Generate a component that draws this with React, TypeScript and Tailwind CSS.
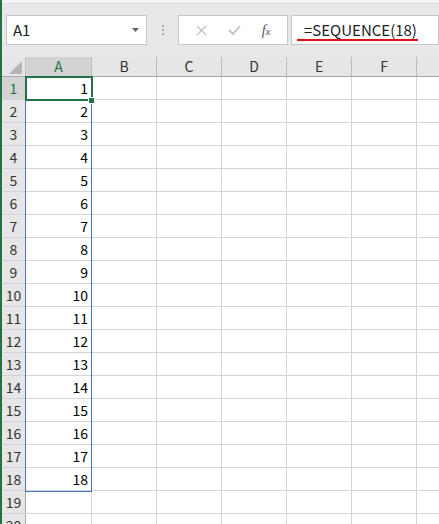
const COLS: [string, number][] = [
  ["A", 66],
  ["B", 65],
  ["C", 65],
  ["D", 65],
  ["E", 65],
  ["F", 65],
  ["G", 65],
];

const ROWS = Array.from({ length: 20 }, (_, i) => i + 1);

const cellFont = { fontFamily: '"Noto Sans CJK JP", "Liberation Sans", sans-serif' };

function FormulaBar() {
  return (
    <div className="flex h-[53px] shrink-0 items-start bg-[#e8e8e8] pt-[11px]">
      {/* name box */}
      <div className="ml-[4px] flex h-[30px] w-[141px] items-center justify-between border border-[#c6c6c6] bg-white pl-[6px] pr-[7px]">
        <span className="text-[15px] text-[#222]" style={cellFont}>
          A1
        </span>
        <svg width="7" height="4" viewBox="0 0 7 4">
          <path d="M0 0h7L3.5 4z" fill="#666" />
        </svg>
      </div>
      <div className="flex h-[30px] w-[31px] flex-col items-center justify-center gap-[2px]">
        <span className="h-[2px] w-[2px] bg-[#aaa]" />
        <span className="h-[2px] w-[2px] bg-[#aaa]" />
        <span className="h-[2px] w-[2px] bg-[#aaa]" />
      </div>
      {/* cancel / enter / fx */}
      <div className="flex h-[30px] w-[110px] items-center justify-around border border-[#c6c6c6] bg-white px-[6px]">
        <svg width="11" height="11" viewBox="0 0 11 11">
          <path d="M1 1l9 9M10 1l-9 9" stroke="#c2c2c2" strokeWidth="1.4" />
        </svg>
        <svg width="13" height="10" viewBox="0 0 13 10">
          <path d="M1 5l4 4 7-8" stroke="#c2c2c2" strokeWidth="1.8" fill="none" />
        </svg>
        <span className="text-[14px] italic text-[#555]" style={{ fontFamily: '"Liberation Serif", serif' }}>
          f<span className="text-[11px]">x</span>
        </span>
      </div>
      {/* formula input */}
      <div className="ml-[3px] flex h-[30px] min-w-0 flex-1 items-center border border-[#c6c6c6] bg-white pl-[5px]">
        <span
          className="border-b-2 border-[#e0101a] pl-[7px] pr-[1px] text-[15px] leading-[19px] text-[#222]"
          style={cellFont}
        >
          =SEQUENCE(18)
        </span>
      </div>
    </div>
  );
}

function Grid() {
  return (
    <div className="relative shrink-0 bg-white">
      {/* header row */}
      <div className="flex h-[20px] border-b border-[#a8a8a8] bg-[#e6e6e6]">
        <div className="relative w-[24px] shrink-0 border-r border-[#c0c0c0]">
          <svg className="absolute bottom-[2px] right-[3px]" width="13" height="13" viewBox="0 0 13 13">
            <path d="M13 0v13H0z" fill="#b4b4b4" />
          </svg>
        </div>
        {COLS.map(([c, w]) => (
          <div
            key={c}
            className={`flex shrink-0 items-center justify-center border-r border-[#bcbcbc] text-[14px] ${
              c === "A" ? "bg-[#d3d3d3] text-[#217346]" : "text-[#333]"
            }`}
            style={{ width: w, ...cellFont }}
          >
            {c}
          </div>
        ))}
      </div>
      {ROWS.map((r) => (
        <div key={r} className="flex h-[23px] border-b border-[#d4d4d4]">
          <div
            className={`flex w-[24px] shrink-0 items-center justify-center border-r border-[#a8a8a8] text-[14px] ${
              r === 1 ? "bg-[#d3d3d3] text-[#217346]" : "bg-[#e6e6e6] text-[#333]"
            }`}
            style={cellFont}
          >
            {r}
          </div>
          {COLS.map(([c, w]) => (
            <div
              key={c}
              className="flex shrink-0 items-center justify-end border-r border-[#d4d4d4] pr-[3px] text-[14px] text-black"
              style={{ width: w, ...cellFont }}
            >
              {c === "A" && r <= 18 ? r : ""}
            </div>
          ))}
        </div>
      ))}
      {/* spill range */}
      <div className="pointer-events-none absolute left-[23px] top-[19px] h-[416px] w-[67px] border border-[#4a72c0]" />
      {/* active cell */}
      <div className="pointer-events-none absolute left-[23px] top-[19px] h-[25px] w-[68px] border-2 border-[#217346]" />
      <div className="pointer-events-none absolute left-[86px] top-[40px] h-[7px] w-[7px] border border-white bg-[#217346]" />
    </div>
  );
}

export default function App() {
  return (
    <div className="flex h-[524px] w-[439px] overflow-hidden bg-[#e8e8e8]">
      <div className="w-[2px] shrink-0 bg-[#217346]" />
      <div className="flex min-w-0 flex-1 flex-col">
        <div className="flex h-[4px] shrink-0 overflow-hidden border-b border-[#dcdcdc] bg-[#f4f4f4] text-[12px] leading-[12px] text-[#555]">
          <span className="ml-[104px] -mt-[9px] tracking-[3px]" style={cellFont}>
            ーーーーーーー
          </span>
          <span className="ml-[152px] -mt-[9px] tracking-[2px]" style={cellFont}>
            ー ーーー
          </span>
        </div>
        <FormulaBar />
        <Grid />
      </div>
    </div>
  );
}
